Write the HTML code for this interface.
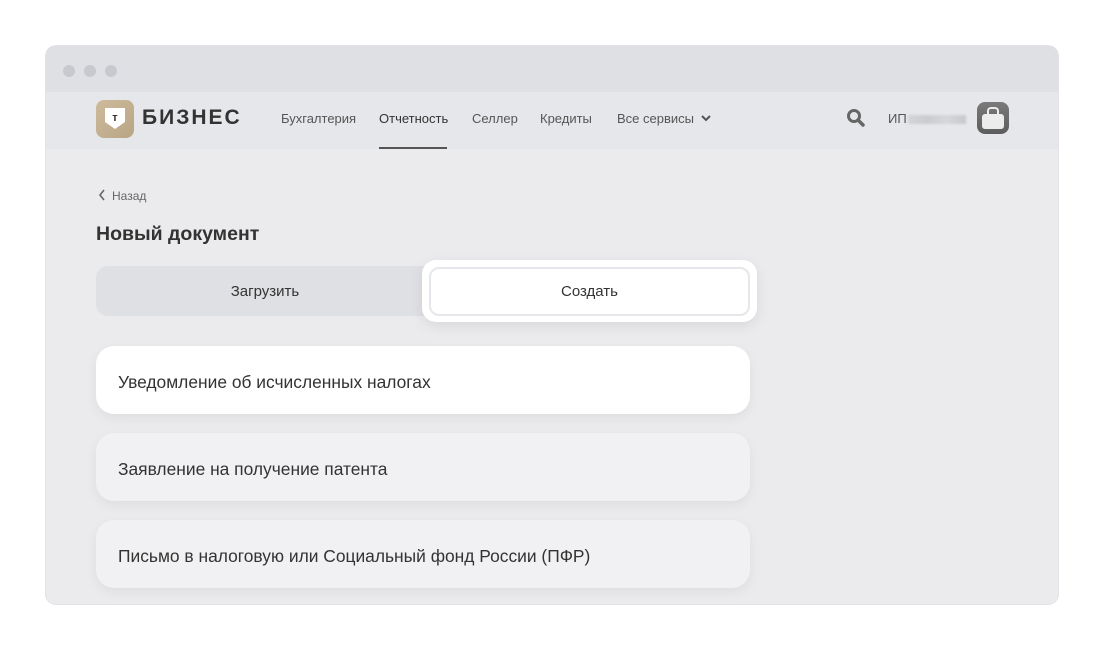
<!DOCTYPE html>
<html><head><meta charset="utf-8"><style>
*{box-sizing:border-box;margin:0;padding:0}
body{width:1104px;height:651px;background:#fff;font-family:"Liberation Sans",sans-serif;position:relative;overflow:hidden}
.frame{position:absolute;left:46px;top:46px;width:1012px;height:558px;border-radius:10px;background:#ebebed;overflow:hidden;box-shadow:0 0 0 1px #e2e3e6}
.tb{position:absolute;left:0;top:0;width:100%;height:46px;background:#dfe0e4}
.dot{position:absolute;top:19px;width:12px;height:12px;border-radius:50%;background:#c7c9cf}
.hd{position:absolute;left:0;top:46px;width:100%;height:57px;background:#e6e7ea}
.nav{position:absolute;top:19px;font-size:13px;color:#555}
.abs{position:absolute}
.card{position:absolute;left:50px;width:654px;height:68px;border-radius:18px;background:#f1f1f3;box-shadow:0 4px 12px rgba(0,0,0,.06);font-size:17.4px;color:#333;padding:26px 0 0 22px}
</style></head><body>
<div class="frame">
<div class="tb"><div class="dot" style="left:17px"></div><div class="dot" style="left:38px"></div><div class="dot" style="left:59px"></div></div>
<div class="hd">
 <div class="abs" style="left:50px;top:8px;width:38px;height:38px;border-radius:8px;background:linear-gradient(135deg,#cdbb9c,#b9a584)"></div>
 <svg class="abs" style="left:58px;top:15px" width="22" height="24" viewBox="0 0 22 24"><path d="M1 1H21V15L11 22L1 15Z" fill="#fff"/><text x="11" y="14" font-family="Liberation Sans" font-weight="bold" font-size="11" text-anchor="middle" fill="#333">т</text></svg>
 <div class="abs" style="left:96px;top:14px;font-size:21px;font-weight:bold;color:#333;letter-spacing:2px">БИЗНЕС</div>
 <div class="nav" style="left:235px">Бухгалтерия</div>
 <div class="nav" style="left:333px;color:#333">Отчетность</div>
 <div class="abs" style="left:333px;top:55px;width:68px;height:2px;background:#555"></div>
 <div class="nav" style="left:426px">Селлер</div>
 <div class="nav" style="left:494px">Кредиты</div>
 <div class="nav" style="left:571px">Все сервисы</div>
 <svg class="abs" style="left:654px;top:22px" width="12" height="10"><path d="M2 2L6 6L10 2" stroke="#555" stroke-width="2" fill="none"/></svg>
 <svg class="abs" style="left:800px;top:16px" width="22" height="22"><circle cx="8" cy="8" r="5.5" stroke="#666" stroke-width="3" fill="none"/><path d="M12 12L17 17" stroke="#666" stroke-width="3.5" stroke-linecap="round"/></svg>
 <div class="nav" style="left:842px;color:#555">ИП</div>
 <div class="abs" style="left:862px;top:23px;width:58px;height:9px;background:linear-gradient(90deg,#d3d4d7,#cbccd0,#d6d7da,#c8c9cd);filter:blur(1px)"></div>
 <div class="abs" style="left:931px;top:10px;width:32px;height:32px;border-radius:8px;background:linear-gradient(180deg,#7a7a7a,#5d5d5d)"></div>
 <div class="abs" style="left:936px;top:22px;width:22px;height:15px;border-radius:3px;background:#ececec"></div>
 <div class="abs" style="left:941px;top:15px;width:12px;height:8px;border:2px solid #ececec;border-bottom:none;border-radius:4px 4px 0 0"></div>
</div>
<svg class="abs" style="left:52px;top:143px" width="8" height="12"><path d="M6 1L2 6L6 11" stroke="#666" stroke-width="1.6" fill="none"/></svg>
<div class="abs" style="left:66px;top:143px;font-size:12px;color:#666">Назад</div>
<div class="abs" style="left:50px;top:177px;font-size:19.5px;font-weight:bold;color:#333">Новый документ</div>
<div class="abs" style="left:50px;top:220px;width:370px;height:50px;border-radius:12px;background:#dfe0e3"></div>
<div class="abs" style="left:50px;top:237px;width:338px;text-align:center;font-size:15px;color:#333">Загрузить</div>
<div class="abs" style="left:376px;top:214px;width:335px;height:62px;border-radius:14px;background:#fff;box-shadow:0 4px 14px rgba(0,0,0,.08)"></div>
<div class="abs" style="left:383px;top:221px;width:321px;height:49px;border-radius:10px;background:#fff;border:2px solid #e6e7ea"></div>
<div class="abs" style="left:383px;top:237px;width:321px;text-align:center;font-size:15px;color:#333">Создать</div>
<div class="card" style="top:300px;background:#fff">Уведомление об исчисленных налогах</div>
<div class="card" style="top:387px">Заявление на получение патента</div>
<div class="card" style="top:474px">Письмо в налоговую или Социальный фонд России (ПФР)</div>
</div>
</body></html>
